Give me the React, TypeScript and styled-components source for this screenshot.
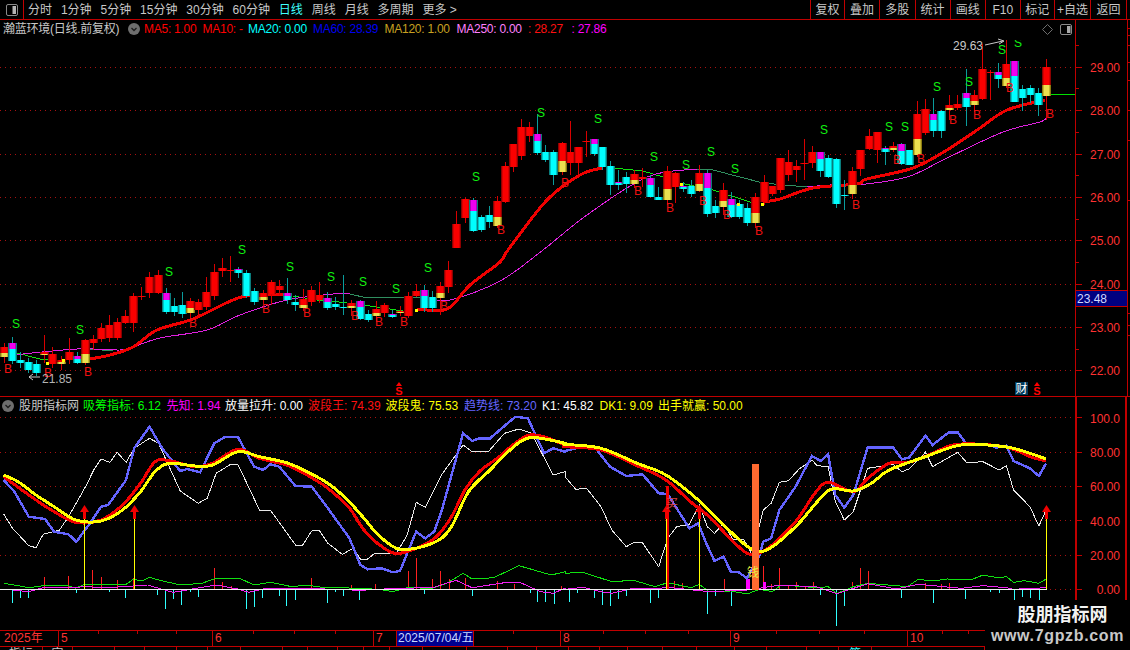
import React from "react";
import styled, { createGlobalStyle } from "styled-components";

const FONT = `"Liberation Sans", "Noto Sans CJK SC", sans-serif`;
const RED = "#c00000";

const Global = createGlobalStyle`
  html, body { margin: 0; padding: 0; background: #000; overflow: hidden; }
  #root { width: 1130px; height: 650px; }
`;

const Page = styled.div`
  position: relative;
  width: 1130px;
  height: 650px;
  overflow: hidden;
  display: flex;
  flex-direction: column;
  background: #000;
  font: 12px/14px ${FONT};
  color: #c8c8c8;
`;

const Toolbar = styled.div`
  height: 19px;
  flex: none;
  display: flex;
  align-items: center;
  border-bottom: 1px solid ${RED};
`;
const LayoutBox = styled.div`
  width: 23px;
  height: 100%;
  flex: none;
  display: flex;
  align-items: center;
  justify-content: center;
  border-right: 1px solid ${RED};
`;
const Periods = styled.div`
  display: flex;
  gap: 8.9px;
  margin-left: 4px;
`;
const Period = styled.span<{ $active?: boolean }>`
  color: ${(p) => (p.$active ? "#3fffff" : "#c8c8c8")};
  white-space: nowrap;
`;
const ToolGroup = styled.div`
  margin-left: auto;
  height: 100%;
  display: flex;
  padding-right: 3px;
`;
const ToolButton = styled.div<{ $w: number }>`
  width: ${(p) => p.$w}px;
  box-sizing: border-box;
  border-left: 1px solid ${RED};
  display: flex;
  align-items: center;
  justify-content: center;
  white-space: nowrap;
  &:last-child {
    border-right: 1px solid ${RED};
  }
`;

const Pane = styled.div<{ $h: number }>`
  position: relative;
  height: ${(p) => p.$h}px;
  flex: none;
  box-sizing: border-box;
  display: flex;
`;
const PricePane = styled(Pane)`
  border-bottom: 1px solid ${RED};
`;
const Legend = styled.div<{ $left: number; $tight?: boolean }>`
  position: absolute;
  top: 2px;
  left: ${(p) => p.$left}px;
  height: 14px;
  display: flex;
  align-items: center;
  letter-spacing: ${(p) => (p.$tight ? "-0.25px" : "0")};
`;
const LegendItem = styled.span<{ $c: string; $w?: number }>`
  color: ${(p) => p.$c};
  white-space: nowrap;
  flex: none;
  width: ${(p) => (p.$w ? `${p.$w}px` : "auto")};
`;
const Chevron = styled.svg<{ $mr: number }>`
  flex: none;
  margin-right: ${(p) => p.$mr}px;
`;
const Plot = styled.svg`
  display: block;
  flex: none;
`;

const TimeAxis = styled.div`
  position: relative;
  flex: none;
  height: 17px;
  box-sizing: border-box;
  border-top: 1px solid ${RED};
  border-bottom: 1px solid ${RED};
  display: flex;
`;
const TimeCell = styled.div<{ $w: number; $pad?: number }>`
  width: ${(p) => p.$w}px;
  flex: none;
  box-sizing: border-box;
  padding-left: ${(p) => p.$pad ?? 2}px;
  border-right: 1px solid ${RED};
  color: #ff3232;
  line-height: 15px;
  white-space: nowrap;
`;
const DateCell = styled(TimeCell)`
  background: #000090;
  color: #c8d8ff;
`;
const TickLayer = styled.svg`
  position: absolute;
  left: 0;
  top: 0;
`;
const TabRow = styled.div`
  flex: none;
  height: 3px;
  display: flex;
  overflow: hidden;
`;
const Tab = styled.div<{ $w: number; $c?: string }>`
  width: ${(p) => p.$w}px;
  flex: none;
  box-sizing: border-box;
  border-right: 1px solid ${RED};
  color: ${(p) => p.$c ?? "#c8c8c8"};
  text-align: center;
  line-height: 14px;
  white-space: nowrap;
  overflow: hidden;
`;

const Watermark = styled.div`
  position: absolute;
  right: 0;
  bottom: 0;
  width: 145px;
  height: 50px;
  background: #000;
  display: flex;
  flex-direction: column;
  align-items: center;
  padding-top: 4px;
  box-sizing: border-box;
`;
const MarkTitle = styled.div`
  font: bold 18px/22px ${FONT};
  color: #f2f2f2;
  padding-left: 10px;
`;
const MarkUrl = styled.div`
  font: bold 16px/20px ${FONT};
  color: #c8c8c8;
  letter-spacing: 0.65px;
  white-space: nowrap;
`;

// type, bodyTop, bodyBottom, wickTop, wickBottom
type C = [string, number, number, number, number];
const candles: C[] = [
  ["y",347,357,343,363],["m",343,361,337,364],["c",360,363,352,368],["c",362,370,358,373],["c",364,373,360,376],
  ["y",352,355,335,363],["r",354,364,347,368],["y",360,364,356,370],["r",352,360,338,364],["m",356,363,352,364],
  ["y",340,363,339,365],["r",339,343,335,350],["r",328,339,323,342],["r",325,338,315,342],["r",322,338,318,340],
  ["r",316,323,310,324],["r",296,323,293,332],["r",296,297,287,300],["r",277,293,272,298],["r",275,293,270,294],
  ["m",293,312,288,314],["c",306,312,298,316],["c",305,314,292,318],["y",301,313,298,318],["r",302,310,299,316],
  ["r",292,307,277,310],["r",272,296,264,300],["r",268,271,258,277],["r",270,271,256,282],["m",269,273,267,278],
  ["c",273,296,270,298],["c",291,302,288,305],["y",293,300,290,304],["r",282,294,280,305],["r",286,290,280,295],
  ["m",293,300,278,304],["c",302,305,295,311],["y",299,308,289,311],["r",290,302,286,306],["r",295,300,282,303],
  ["m",298,308,292,310],["c",304,307,297,310],["c",307,308,275,315],["y",303,308,300,316],["m",301,319,300,320],
  ["c",314,320,310,322],["y",309,316,301,322],["r",305,313,303,317],["m",314,317,310,318],["y",311,313,306,316],
  ["r",296,316,292,318],["r",291,296,284,297],["m",290,308,285,312],["c",297,308,291,312],["y",286,298,282,315],
  ["r",270,287,261,293],["r",224,248,211,248],["r",199,218,198,223],["m",200,231,198,232],["c",217,230,215,232],
  ["c",215,222,206,228],["y",201,226,196,228],["r",166,202,162,203],["r",144,167,144,172],["r",127,156,119,160],
  ["r",127,136,122,142],["m",134,153,114,155],["c",152,160,145,162],["c",152,175,150,185],["y",143,172,142,175],
  ["r",152,163,121,175],["r",147,163,147,174],["r",141,142,131,157],["m",139,154,139,156],["c",147,167,147,170],
  ["c",166,185,161,195],["m",182,185,170,190],["c",177,184,172,193],["y",174,184,170,188],["r",177,179,168,187],
  ["m",178,197,175,197],["c",197,200,187,200],["y",171,200,166,205],["r",173,187,172,203],["m",186,189,182,192],
  ["c",186,194,180,197],["y",173,191,165,192],["m",173,214,170,217],["c",206,213,200,218],["y",190,207,183,215],
  ["m",199,217,192,218],["c",204,217,200,219],["c",208,223,203,226],["y",197,223,193,228],["r",182,202,175,205],
  ["r",186,194,186,196],["r",158,190,158,193],["r",162,175,150,181],["r",166,170,160,182],["r",163,164,139,180],
  ["r",152,163,146,168],["m",152,171,152,177],["c",158,177,155,178],["c",159,204,158,208],["c",195,196,180,210],
  ["y",171,194,167,199],["r",150,169,150,176],["r",136,149,129,150],["r",132,150,132,163],["m",148,152,146,165],
  ["y",146,150,142,152],["m",144,164,143,165],["c",150,165,150,165],["y",114,155,101,157],["r",109,133,99,135],
  ["m",114,131,98,137],["c",111,131,110,138],["y",105,110,95,120],["r",104,108,95,110],["m",93,107,69,126],
  ["y",95,105,90,112],["r",69,99,44,100],["r",72,73,70,100],["m",72,79,63,88],["y",64,86,40,88],
  ["m",61,102,61,102],["c",89,98,85,111],["c",88,95,85,103],["c",93,105,88,116],["y",67,96,59,120],
];
const cx = (i: number) => Math.round(4 + 8.08 * i);

const pts = (a: number[][]) => a.map((p) => p.join(",")).join(" ");

// Catmull-Rom through the sampled points, for the smooth moving averages
const smooth = (a: number[][]) => {
  let d = `M${a[0][0]} ${a[0][1]}`;
  for (let i = 0; i < a.length - 1; i++) {
    const p0 = a[i - 1] ?? a[i];
    const p1 = a[i];
    const p2 = a[i + 1];
    const p3 = a[i + 2] ?? p2;
    const c1 = [p1[0] + (p2[0] - p0[0]) / 6, p1[1] + (p2[1] - p0[1]) / 6];
    const c2 = [p2[0] - (p3[0] - p1[0]) / 6, p2[1] - (p3[1] - p1[1]) / 6];
    d += ` C${c1[0].toFixed(1)} ${c1[1].toFixed(1)} ${c2[0].toFixed(1)} ${c2[1].toFixed(1)} ${p2[0]} ${p2[1]}`;
  }
  return d;
};

const maRed1 = [[90,359],[110,355],[133,347],[157,330],[193,319],[238,298],[267,295],[285,295]];
const maRed2 = [[417,309],[447,309],[470,285],[500,262],[508,250],[547,200],[580,175],[602,168]];
const maRed3 = [[763,202],[780,199],[813,188],[857,184],[867,179],[913,168],[947,150],[980,128],[1007,110],[1045,100]];
const maMag1 = [[13,355],[77,349],[120,350],[133,347],[160,338],[207,330],[240,315],[287,300],[333,294],[350,294]];
const maMag2 = [[423,297],[450,300],[500,281],[543,250],[587,215],[647,177],[697,169]];
const maMag3 = [[807,187],[830,185],[857,185],[907,177],[947,158],[1003,132],[1040,122],[1047,117]];
const maTeal = [[[90,349],[113,351]],[[350,294],[367,298],[423,297]],[[697,169],[713,170],[763,183],[807,187]]];
const maGreen = [[[13,352],[40,359],[60,361]],[[293,296],[317,300],[323,300],[363,305],[403,311]],[[613,168],[643,171],[663,177],[680,183],[713,190],[750,202],[760,203]]];

const sLabels = [[16,324],[80,330],[169,272],[242,250],[290,267],[331,277],[363,282],[396,289],[428,268],[476,177],[541,113],[598,119],[654,157],[686,165],[711,152],[735,169],[824,130],[889,127],[905,127],[937,87],[969,82],[1002,50]];
const bLabels = [[8,368],[48,372],[88,371],[193,322],[266,308],[307,312],[355,315],[379,321],[404,321],[444,305],[501,229],[565,182],[638,190],[670,207],[703,200],[727,214],[759,230],[856,204],[897,159],[921,158],[953,119],[977,114],[1010,87],[1050,113]];
const dots = [[46,362],[62,359],[415,309],[680,183],[737,203],[761,203]];

const priceGrid: [number, string][] = [[67,"29.00"],[110,"28.00"],[154,"27.00"],[197,"26.00"],[240,"25.00"],[284,"24.00"],[327,"23.00"],[370,"22.00"]];
const lowerGrid: [number, string][] = [[417.5,"100.0"],[452,"80.00"],[486,"60.00"],[520.5,"40.00"],[555,"20.00"],[589,"0.00"]];

const L = (a: number[][], b: number[][]) => [
  ...a.map(([x, y]) => [+(x / 2.775).toFixed(1), +(395 + y / 3).toFixed(1)]),
  ...b.map(([x, y]) => [+(565 + x / 2.775).toFixed(1), +(395 + y / 3).toFixed(1)]),
];

const yellowLine = L(
  [[10,240],[50,260],[100,300],[150,335],[210,375],[280,378],[340,345],[390,290],[430,230],[470,205],[540,213],[590,210],[660,170],[720,185],[800,205],[860,235],[910,265],[960,310],[1010,370],[1050,420],[1110,463],[1200,445],[1250,400],[1300,290],[1360,225],[1410,170],[1470,128],[1568,145]],
  [[0,148],[100,160],[200,205],[280,240],[370,315],[440,390],[510,457],[560,465],[640,395],[700,320],[740,282],[800,288],[850,265],[900,225],[1000,185],[1100,150],[1220,155],[1290,175],[1335,192]]
);
const redLine = L(
  [[10,245],[100,315],[150,350],[210,382],[280,375],[340,330],[390,265],[430,200],[470,197],[540,215],[590,205],[660,163],[720,190],[800,212],[860,245],[910,280],[970,340],[1010,405],[1060,455],[1110,475],[1200,435],[1250,370],[1290,285],[1330,230],[1380,190],[1470,120],[1568,150]],
  [[0,155],[100,165],[200,212],[280,255],[350,322],[400,365],[460,432],[510,477],[560,462],[640,380],[690,300],[730,262],[800,290],[840,250],[900,205],[960,200],[1020,175],[1090,148],[1220,155],[1290,185],[1335,198]]
);
const blueLine = L(
  [[10,255],[40,290],[80,365],[125,372],[150,410],[190,418],[212,440],[250,385],[280,335],[300,330],[350,255],[372,160],[415,95],[450,160],[500,228],[520,222],[555,232],[595,145],[625,125],[660,125],[705,215],[730,225],[750,208],[775,215],[820,273],[865,275],[910,340],[970,430],[1000,510],[1020,523],[1060,520],[1090,532],[1110,528],[1155,410],[1180,430],[1205,410],[1225,350],[1285,115],[1310,138],[1330,130],[1360,130],[1430,65],[1465,70],[1510,175],[1535,160],[1568,170]],
  [[0,168],[50,155],[85,160],[125,215],[170,243],[215,238],[260,295],[285,297],[345,400],[370,385],[390,440],[415,498],[440,485],[460,530],[480,530],[505,550],[540,480],[550,440],[572,430],[595,345],[640,275],[685,183],[710,198],[730,178],[750,300],[775,338],[800,300],[840,157],[910,157],[935,193],[955,188],[1000,122],[1020,150],[1065,112],[1090,112],[1115,148],[1180,148],[1195,158],[1225,152],[1245,198],[1290,220],[1315,243],[1335,205]]
);
const whiteLine = L(
  [[10,357],[35,400],[80,452],[100,458],[120,418],[165,405],[190,365],[240,270],[260,225],[280,192],[305,202],[325,172],[350,202],[372,160],[415,130],[440,145],[500,288],[550,325],[575,310],[600,235],[640,208],[660,208],[720,345],[750,345],[800,420],[820,450],[840,450],[865,408],[885,405],[910,445],[950,478],[980,460],[1000,492],[1020,492],[1040,475],[1100,475],[1130,420],[1155,322],[1180,337],[1225,240],[1285,150],[1310,170],[1355,170],[1400,115],[1440,102],[1475,115],[1535,240],[1568,230]],
  [[0,245],[30,283],[60,280],[100,335],[130,405],[170,455],[190,443],[215,443],[260,515],[285,430],[310,395],[345,388],[373,330],[395,395],[415,415],[440,385],[465,432],[495,432],[515,470],[540,390],[550,345],[572,325],[595,262],[620,257],[650,222],[685,195],[700,212],[730,215],[750,320],[775,375],[800,350],[840,220],[910,208],[935,230],[955,222],[1000,172],[1020,215],[1090,172],[1115,203],[1160,200],[1205,225],[1225,212],[1245,285],[1290,335],[1315,393],[1335,345]]
);
const osGreen = L(
  [[10,565],[50,572],[80,578],[120,572],[190,572],[210,580],[235,568],[300,570],[350,568],[370,553],[395,558],[415,547],[440,555],[500,570],[560,565],[600,550],[665,550],[705,570],[750,562],[810,575],[850,570],[900,578],[950,578],[1050,583],[1090,590],[1130,578],[1200,580],[1240,565],[1285,535],[1310,552],[1370,548],[1440,512],[1530,540],[1568,530]],
  [[0,535],[50,532],[130,560],[190,556],[250,575],[285,563],[350,578],[373,568],[400,590],[460,588],[505,597],[540,583],[575,590],[600,570],[700,578],[730,575],[755,595],[800,575],[840,565],[920,572],[950,575],[980,553],[1020,558],[1060,552],[1130,553],[1160,540],[1200,548],[1225,545],[1245,562],[1275,557],[1315,565],[1335,552]]
);
const osMag = L(
  [[10,582],[80,590],[120,578],[190,578],[235,575],[300,578],[410,570],[440,580],[480,592],[600,570],[660,582],[690,592],[730,582],[850,580],[1000,586],[1100,580],[1200,578],[1265,556],[1310,578],[1400,563],[1445,563],[1500,590],[1535,595],[1568,580]],
  [[0,583],[50,577],[100,590],[130,595],[190,580],[250,582],[285,577],[400,590],[505,585],[600,570],[700,576],[755,596],[840,566],[920,582],[980,568],[1100,580],[1160,572],[1225,578],[1245,583],[1335,578]]
);

const scaleBars = (a: number[][], off: number) =>
  a.map(([x, y]) => [Math.round(off + x / 2.775), 395 + y / 3]);
const cyanBars = [
  ...scaleBars([[34,623],[56,610],[78,608],[211,594],[303,590],[348,608],[437,600],[459,641],[481,612],[503,629],[526,590],[550,607],[684,641],[706,636],[728,608],[773,603],[795,632],[819,615],[908,623],[930,590],[953,603],[997,615],[1177,598],[1311,602],[1470,594],[1491,620],[1513,620],[1536,628]], 0),
  ...scaleBars([[11,620],[34,594],[80,609],[104,629],[126,632],[148,612],[170,603],[237,623],[259,609],[395,656],[417,603],[462,632],[709,600],[753,692],[775,632],[933,609],[1022,623],[1111,612],[1180,590],[1203,595],[1247,614],[1269,605],[1291,609],[1314,614]], 565),
];
const redBars = [
  ...scaleBars([[123,546],[190,544],[256,525],[281,546],[325,555],[370,550],[595,518],[617,560],[640,572],[864,548],[975,570],[1041,566],[1133,528],[1155,489],[1200,552],[1222,528],[1245,552],[1289,548],[1380,558],[1425,566],[1558,572]], 0),
  ...scaleBars([[303,558],[325,563],[440,552],[550,512],[572,568],[594,518],[620,572],[642,560],[665,575],[687,560],[797,560],[820,518],[842,527],[1000,565],[1044,568],[1066,563]], 565),
];
const arrows = [84, 134, 666, 699, 1046];

const rightTicks = [28, 35, 45, 62, 80, 110, 140, 200, 313, 325, 335];

const SvgText = styled.text`
  font-family: ${FONT};
  font-size: 12px;
`;

const ChevronIcon = ({ mr }: { mr: number }) => (
  <Chevron $mr={mr} width="12" height="12" viewBox="0 0 12 12">
    <circle cx="6" cy="6" r="6" fill="#6e6e6e" />
    <path d="M3.5 5 L6 7.5 L8.5 5" fill="none" stroke="#1c1c1c" strokeWidth="1.3" />
  </Chevron>
);

const LayoutIcon = () => (
  <svg width="12" height="12" viewBox="0 0 12 12">
    <rect x="0.5" y="0.5" width="11" height="11" rx="1.5" fill="none" stroke="#8a8a8a" />
    <rect x="6.5" y="2" width="3.5" height="8" fill="#b4b4b4" />
  </svg>
);

const shades: Record<string, [string, string, string]> = {
  r: ["#8c0000", "#d40000", "#fa0000"],
  c: ["#0a7c7c", "#00c4c4", "#00ffff"],
  m: ["#0a7c7c", "#b000b0", "#f000f0"],
  y: ["#8c7c10", "#c4b430", "#ece050"],
};

const Band = ({ x, y, h, s }: { x: number; y: number; h: number; s: [string, string, string] }) => (
  <g>
    <rect x={x - 4} y={y} width="9" height={h} fill={s[0]} />
    <rect x={x - 3} y={y} width="7" height={h} fill={s[1]} />
    <rect x={x - 2} y={y} width="5" height={h} fill={s[2]} />
  </g>
);

const Candle = ({ c, i }: { c: C; i: number }) => {
  const [t, top, bot, wt, wb] = c;
  const x = cx(i);
  const cool = t === "c" || t === "m";
  const h = Math.max(bot - top, 1);
  const cut = t === "m" ? Math.round(h * 0.36) : t === "y" ? Math.round(h * 0.62) : 0;
  return (
    <g>
      <rect x={x} y={wt} width="1" height={Math.max(wb - wt, 1)} fill={cool ? "#0a9c9c" : "#d80000"} />
      <Band x={x} y={top} h={h} s={cool ? shades.c : shades.r} />
      {t === "m" && <Band x={x} y={top} h={cut} s={shades.m} />}
      {t === "y" && <Band x={x} y={top + cut} h={h - cut} s={shades.y} />}
    </g>
  );
};

const RedS = ({ x }: { x: number }) => (
  <g>
    <path d={`M${x - 3} 386 L${x} 382 L${x + 3} 386 Z`} fill="#ff0000" />
    <SvgText x={x} y={395} fill="#ff0000" textAnchor="middle" fontWeight="bold" style={{ fontSize: 11 }}>
      S
    </SvgText>
  </g>
);

const PricePlot = () => (
  <Plot width="1075" height="376" viewBox="0 20 1075 376" shapeRendering="crispEdges">
    {priceGrid.map(([y]) => (
      <line key={y} x1="0" x2="1075" y1={y + 0.5} y2={y + 0.5} stroke="#a81010" strokeDasharray="1 4" />
    ))}
    <line x1="1050" x2="1075" y1="94.5" y2="94.5" stroke="#00e000" />
    {maTeal.map((p, i) => (
      <polyline key={i} points={pts(p)} fill="none" stroke="#2f8f5f" />
    ))}
    {maGreen.map((p, i) => (
      <polyline key={i} points={pts(p)} fill="none" stroke="#10e010" />
    ))}
    {[maMag1, maMag2, maMag3].map((p, i) => (
      <path key={i} d={smooth(p)} fill="none" stroke="#e020e0" strokeWidth="1" />
    ))}
    {[maRed1, maRed2, maRed3].map((p, i) => (
      <path key={i} d={smooth(p)} fill="none" stroke="#f00000" strokeWidth="3" />
    ))}
    {candles.map((c, i) => (
      <Candle key={i} c={c} i={i} />
    ))}
    {dots.map(([x, y]) => (
      <rect key={x} x={x} y={y} width="3" height="3" fill="#ffff00" />
    ))}
    <g shapeRendering="auto">
      {sLabels.map(([x, y]) => (
        <SvgText key={x} x={x} y={y + 4} fill="#10f010" textAnchor="middle">
          S
        </SvgText>
      ))}
      <SvgText x={1018} y={47} fill="#10f010" textAnchor="middle">
        S
      </SvgText>
      <rect x="1012" y="28" width="12" height="12" fill="#000" />
      {bLabels.map(([x, y]) => (
        <SvgText key={x} x={x} y={y + 5} fill="#f01010" textAnchor="middle">
          B
        </SvgText>
      ))}
      <SvgText x={953} y={50} fill="#c8c8c8">
        29.63
      </SvgText>
      <path d="M985 45 L1003 41 M998 39 L1004 41 L999 44" fill="none" stroke="#c8c8c8" />
      <SvgText x={42} y={383} fill="#b4b4b4">
        21.85
      </SvgText>
      <path d="M40 377 L29 377 M33 374 L29 377 L33 380" fill="none" stroke="#c8c8c8" />
      <RedS x={399} />
      <RedS x={1037} />
      <rect x="1015" y="382" width="13" height="13" fill="#003c5c" />
      <SvgText x={1015.5} y={393} fill="#ffffff">
        财
      </SvgText>
      <path d="M1047.5 24.5 L1052.5 29.5 L1047.5 34.5 L1042.5 29.5 Z" fill="none" stroke="#6e6e6e" />
      <rect x="1060.5" y="24.5" width="11" height="10" rx="1.5" fill="none" stroke="#8a8a8a" />
      <rect x="1067" y="26" width="3.5" height="7" fill="#a8a8a8" />
    </g>
  </Plot>
);

const PriceAxis = () => (
  <Plot width="55" height="376" viewBox="1075 20 55 376" shapeRendering="crispEdges">
    <line x1="1075.5" x2="1075.5" y1="20" y2="396" stroke={RED} />
    <line x1="1127.5" x2="1127.5" y1="20" y2="396" stroke={RED} />
    {[45, 88, 132, 175, 219, 262, 306, 349].map((y) => (
      <line key={y} x1="1076" x2="1079" y1={y + 0.5} y2={y + 0.5} stroke={RED} />
    ))}
    {rightTicks.map((y) => (
      <line key={y} x1="1127" x2="1130" y1={y + 0.5} y2={y + 0.5} stroke={RED} />
    ))}
    {priceGrid.map(([y, s]) => (
      <g key={y}>
        <line x1="1076" x2="1082" y1={y + 0.5} y2={y + 0.5} stroke={RED} />
        <SvgText x={1120} y={y + 5} fill="#ff3232" textAnchor="end" shapeRendering="auto">
          {s}
        </SvgText>
      </g>
    ))}
    <rect x="1076" y="290" width="51" height="1" fill={RED} />
    <rect x="1076" y="291" width="51" height="15" fill="#000080" />
    <rect x="1076" y="306" width="51" height="1" fill={RED} />
    <SvgText x={1077} y={303} fill="#d0d8ff">
      23.48
    </SvgText>
  </Plot>
);

const LowerPlot = () => (
  <Plot width="1130" height="233" viewBox="0 397 1130 233" shapeRendering="crispEdges">
    {lowerGrid.map(([y]) => (
      <line key={y} x1="0" x2="1075" y1={Math.floor(y) + 0.5} y2={Math.floor(y) + 0.5} stroke="#a81010" strokeDasharray="1 4" />
    ))}
    {redBars.map(([x, y]) => (
      <rect key={`r${x}`} x={x} y={y} width="1" height={589 - y} fill="#ff2020" />
    ))}
    {cyanBars.map(([x, y]) => (
      <rect key={`c${x}`} x={x} y={590} width="1" height={y - 590} fill="#30ffff" />
    ))}
    <rect x="746" y="579" width="4" height="10" fill="#ff00ff" />
    <rect x="763" y="582" width="3" height="7" fill="#ff00ff" />
    <polyline points={pts(osGreen)} fill="none" stroke="#10e010" />
    <polyline points={pts(osMag)} fill="none" stroke="#f020f0" />
    <rect x="0" y="589" width="1047" height="1" fill="#f0f0f0" />
    <polyline points={pts(whiteLine)} fill="none" stroke="#e8e8e8" />
    <polyline points={pts(blueLine)} fill="none" stroke="#6464ff" strokeWidth="2.4" />
    <path d={smooth(redLine)} fill="none" stroke="#f00000" strokeWidth="3" />
    <path d={smooth(yellowLine)} fill="none" stroke="#ffff00" strokeWidth="3" />
    <rect x="666" y="486" width="3" height="103" fill="#f00000" />
    {arrows.map((x) => (
      <g key={x}>
        <rect x={x} y={515} width="1" height={74} fill="#ffff00" />
        <rect x={x - 1} y={511} width="3" height={8} fill="#f00000" />
        <path d={`M${x + 0.5} 505 L${x + 5} 512 L${x - 4} 512 Z`} fill="#f00000" shapeRendering="auto" />
      </g>
    ))}
    <rect x="752" y="464" width="7" height="126" fill="#ff6a30" />
    <g shapeRendering="auto">
      <SvgText x={666} y={508} fill="#d84040">
        买
      </SvgText>
      <SvgText x={747} y={577} fill="#e6f040">
        钱
      </SvgText>
    </g>
    <line x1="1076" x2="1076" y1="397" y2="600" stroke={RED} strokeWidth="2" />
    <line x1="1126" x2="1126" y1="397" y2="600" stroke={RED} strokeWidth="2" />
    {lowerGrid.map(([y, s]) => (
      <g key={y}>
        <line x1="1076" x2="1082" y1={Math.floor(y) + 0.5} y2={Math.floor(y) + 0.5} stroke={RED} />
        <SvgText x={1120} y={y + 5} fill="#ff3232" textAnchor="end" shapeRendering="auto">
          {s}
        </SvgText>
      </g>
    ))}
  </Plot>
);

const periods = ["分时", "1分钟", "5分钟", "15分钟", "30分钟", "60分钟", "日线", "周线", "月线", "多周期", "更多 >"];
const tools: [string, number][] = [["复权",34],["叠加",35],["多股",35.5],["统计",35],["画线",35.5],["F10",34.5],["标记",34.5],["+自选",36],["返回",37]];
const priceLegend: [string, string, number][] = [
  ["MA5: 1.00","#ff0000",58.5],["MA10: -","#ff0000",45.5],["MA20: 0.00","#00ffff",65],["MA60: 28.39","#0000f0",71.5],
  ["MA120: 1.00","#c8a020",72],["MA250: 0.00","#ff80ff",71.5],[": 28.27","#ff1010",43.5],[": 27.86","#ff00ff",40],
];
const lowerLegend: [string, string, number][] = [
  ["吸筹指标: 6.12","#00ff00",83.5],["先知: 1.94","#ff00ff",58.5],["放量拉升: 0.00","#ffffff",83],["波段王: 74.39","#ff1010",77.6],
  ["波段鬼: 75.53","#ffff00",78.4],["趋势线: 73.20","#6666ff",78],["K1: 45.82","#ffffff",57.6],["DK1: 9.09","#ffff00",58.4],["出手就赢: 50.00","#ffff00",90],
];
const timeCells: [string, number, number][] = [["2025年",59,4],["5",154,2],["6",161,2],["7",23,2]];
const timeCells2: [string, number][] = [["",87],["8",170],["9",177],["10",222]];
const ticks = [98,137,176,253,294,335,513,603,645,688,776,819,864,942,968];
const tabStops = [43,73,115,145,177,208,241,283,308,338,364,390,423,467,508,537,569,600,628,663,697,735,767,807,839,872,985];
const tabLabels: Record<number, [string, string?]> = { 0: ["指标"], 1: ["定"], 25: ["筹", "#30ffff"] };

export default function App() {
  return (
    <Page>
      <Global />
      <Toolbar>
        <LayoutBox>
          <LayoutIcon />
        </LayoutBox>
        <Periods>
          {periods.map((p) => (
            <Period key={p} $active={p === "日线"}>
              {p}
            </Period>
          ))}
        </Periods>
        <ToolGroup>
          {tools.map(([t, w]) => (
            <ToolButton key={t} $w={w}>
              {t}
            </ToolButton>
          ))}
        </ToolGroup>
      </Toolbar>

      <PricePane $h={377}>
        <PricePlot />
        <PriceAxis />
        <Legend $left={3} $tight>
          <LegendItem $c="#c8c8c8" $w={125}>
            瀚蓝环境(日线.前复权)
          </LegendItem>
          <ChevronIcon mr={4} />
          {priceLegend.map(([t, c, w]) => (
            <LegendItem key={t} $c={c} $w={w}>
              {t}
            </LegendItem>
          ))}
        </Legend>
      </PricePane>

      <Pane $h={233}>
        <LowerPlot />
        <Legend $left={2}>
          <ChevronIcon mr={5} />
          <LegendItem $c="#c8c8c8" $w={64}>
            股朋指标网
          </LegendItem>
          {lowerLegend.map(([t, c, w]) => (
            <LegendItem key={t} $c={c} $w={w}>
              {t}
            </LegendItem>
          ))}
        </Legend>
      </Pane>

      <TimeAxis>
        {timeCells.map(([t, w, pad]) => (
          <TimeCell key={t} $w={w} $pad={pad}>
            {t}
          </TimeCell>
        ))}
        <DateCell $w={77} $pad={1}>
          2025/07/04/五
        </DateCell>
        {timeCells2.map(([t, w], i) => (
          <TimeCell key={i} $w={w}>
            {t}
          </TimeCell>
        ))}
        <TickLayer width="1130" height="4">
          {ticks.map((x) => (
            <rect key={x} x={x} y={0} width="1" height="3" fill={RED} />
          ))}
        </TickLayer>
      </TimeAxis>
      <TabRow>
        {tabStops.map((x, i) => (
          <Tab key={x} $w={x - (tabStops[i - 1] ?? 0)} $c={tabLabels[i]?.[1]}>
            {tabLabels[i]?.[0]}
          </Tab>
        ))}
      </TabRow>

      <Watermark>
        <MarkTitle>股朋指标网</MarkTitle>
        <MarkUrl>www.7gpzb.com</MarkUrl>
      </Watermark>
    </Page>
  );
}
